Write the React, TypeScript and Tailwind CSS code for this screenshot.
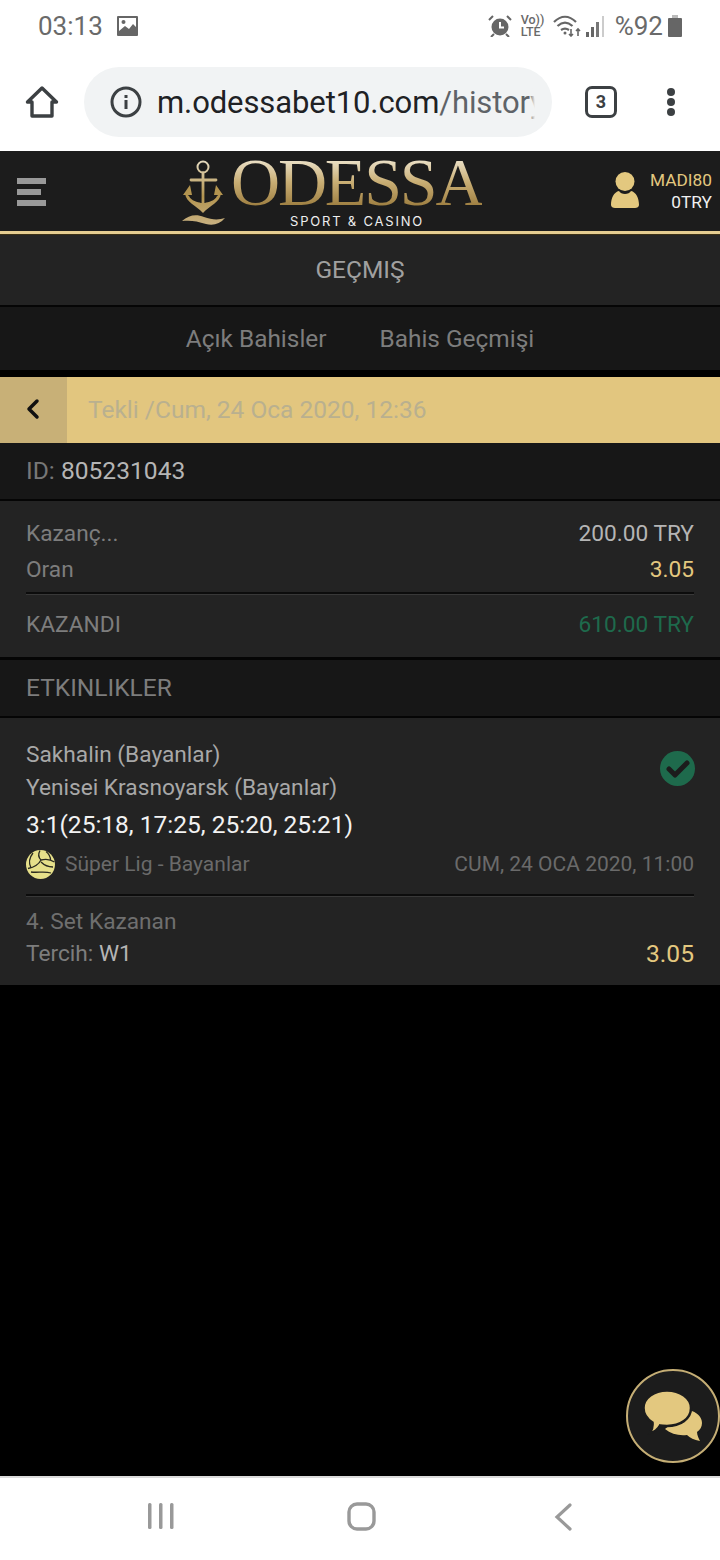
import React from "react";

const roboto = { fontFamily: "Roboto, sans-serif" };

function Row({ left, right, leftClass = "text-[#7d7d7d]", rightClass = "text-[#b5b5b5]" }: { left: string; right: string; leftClass?: string; rightClass?: string }) {
  return (
    <div className="flex items-center justify-between">
      <span className={leftClass}>{left}</span>
      <span className={rightClass}>{right}</span>
    </div>
  );
}

function Divider() {
  return (
    <div className="flex flex-col">
      <div className="h-[2px] bg-[#0c0c0c]" />
      <div className="h-[1px] bg-[#383838]" />
    </div>
  );
}

function StatusBar() {
  return (
    <div className="h-[50px] flex items-center justify-between pt-[2px] pl-[38px] pr-[38px] text-[#6a6a6a] text-[26px] bg-white">
      <div className="flex items-center gap-[14px]">
        <span className="leading-none">03:13</span>
        <svg width="21" height="20" viewBox="0 0 21 20" className="-mt-[1px]"><rect width="21" height="20" rx="1" fill="#666" /><rect x="2" y="2" width="17" height="16" fill="#fff" /><path d="M2 18v-3l6-5 4 3 4-5 3 3v7z" fill="#666" /><circle cx="6.500" cy="6" r="2" fill="#666" /></svg>
      </div>
      <div className="flex items-center">
        <svg width="24" height="22" viewBox="0 0 24 22" className="mr-[9px]"><circle cx="12" cy="12" r="8.500" fill="#666" /><path d="M12 7v5.500h4" stroke="#fff" strokeWidth="2" fill="none" /><path d="M1 5l4-4M23 5l-4-4M6 19l-3 3M18 19l3 3" stroke="#666" strokeWidth="2" /></svg>
        <div className="flex flex-col text-[12.500px] leading-[12px] font-medium mr-[9px] w-[23px] whitespace-nowrap -mt-[1px]"><span>Vo))</span><span>LTE</span></div>
        <svg width="28" height="22" viewBox="0 0 28 22" className="mr-[5px]" fill="none" stroke="#666" strokeWidth="2.200"><path d="M1 7c7-7 15-7 22 0M4.500 11c5-4.500 10-4.500 15 0M8 15c3-2 5-2 8 0" /><circle cx="12" cy="18" r="1.500" fill="#666" stroke="none" /><path d="M18 14v7M25 21v-7M16 19l2 2 2-2M23 16l2-2 2 2" strokeWidth="1.600" /></svg>
        <svg width="19" height="21" viewBox="0 0 19 21" className="mr-[10px]"><rect x="0" y="16" width="3" height="5" fill="#666" /><rect x="5" y="11" width="3" height="10" fill="#666" /><rect x="10" y="6" width="3" height="15" fill="#777" /><rect x="16" y="0" width="2" height="21" fill="#ccc" /></svg>
        <span className="leading-none mr-[5px]">%92</span>
        <svg width="14" height="22" viewBox="0 0 14 22"><rect x="4" y="0" width="6" height="3" fill="#bbb" /><rect x="0" y="3" width="14" height="19" rx="1" fill="#666" /></svg>
      </div>
    </div>
  );
}

function BrowserBar() {
  return (
    <div className="h-[101px] bg-white flex items-center pt-[3px]">
      <div className="w-[84px] flex justify-center">
        <svg width="34" height="34" viewBox="0 0 34 34" fill="none" stroke="#3c4043" strokeWidth="3.400" strokeLinejoin="round" className="-ml-[1px]"><path d="M17 3L2.500 17H7v14h20V17h4.500z" /></svg>
      </div>
      <div className="w-[468px] h-[70px] rounded-[35px] bg-[#f1f3f4] flex items-center pl-[26px] overflow-hidden">
        <svg width="32" height="32" viewBox="0 0 32 32" fill="none" className="shrink-0"><circle cx="16" cy="16" r="14" stroke="#3c4043" strokeWidth="3" /><rect x="14.500" y="14" width="3" height="9" fill="#3c4043" /><rect x="14.500" y="9" width="3" height="3" fill="#3c4043" /></svg>
        <div className="ml-[15px] w-[378px] overflow-hidden whitespace-nowrap text-[31px] leading-[36px] pt-[2px] tracking-[-0.1px] relative">
          <span className="text-[#202124]">m.odessabet10.com</span><span className="text-[#5f6368]">/history</span>
          <div className="absolute right-0 top-0 bottom-0 w-[6px] bg-gradient-to-r from-transparent to-[#f1f3f4]" />
        </div>
      </div>
      <div className="flex-1 flex items-center">
        <div className="ml-[33px] w-[32px] h-[32px] rounded-[7px] border-[3px] border-[#3c4043] flex items-center justify-center text-[#3c4043] text-[18px] font-bold leading-none">3</div>
        <div className="ml-[50px] flex flex-col gap-[2px]">
          <div className="w-[8px] h-[8px] rounded-full bg-[#3c4043]" />
          <div className="w-[8px] h-[8px] rounded-full bg-[#3c4043]" />
          <div className="w-[8px] h-[8px] rounded-full bg-[#3c4043]" />
        </div>
      </div>
    </div>
  );
}

function Logo() {
  return (
    <div className="flex items-start ml-[136px] h-[80px]">
      <svg width="43" height="66" viewBox="0 0 43 66" fill="none" className="mt-[9px] shrink-0">
        <defs>
          <linearGradient id="ag" x1="0" y1="0" x2="0" y2="66" gradientUnits="userSpaceOnUse"><stop offset="0" stopColor="#e6dcc2" /><stop offset="0.55" stopColor="#b3944f" /><stop offset="1" stopColor="#c9b283" /></linearGradient>
        </defs>
        <circle cx="21" cy="7" r="5.500" stroke="url(#ag)" strokeWidth="2" />
        <path d="M21 13v36M9 20h25" stroke="url(#ag)" strokeWidth="2.800" strokeLinecap="round" />
        <path d="M3 33C4 43 14 45 21 53C28 45 38 43 39 33L35 36C33 41 26 42 23 43H19C16 42 9 41 7 36z" fill="url(#ag)" />
        <path d="M1 35L8 25L10 35zM41 35L34 25L32 35z" fill="#b3944f" />
        <path d="M0 61C7 55 14 54 22 57C30 60 37 60 43 58C38 64 31 66 24 64C15 61 8 60 0 61z" fill="url(#ag)" />
      </svg>
      <div className="flex flex-col items-start ml-[6px] mt-[6px]">
        <div className="text-[68px] h-[50px] leading-[50px] tracking-[-2.200px] whitespace-nowrap text-transparent bg-clip-text bg-gradient-to-b from-[#efe7d2] via-[#c9ae74] to-[#9c7d3f]" style={{ fontFamily: "'Liberation Serif', serif" }}>ODESSA</div>
        <div className="ml-[59px] mt-[8px] text-[13px] leading-[13px] tracking-[1.800px] text-[#eeeeee] whitespace-nowrap" style={{ fontFamily: "Inter, sans-serif" }}>SPORT &amp; CASINO</div>
      </div>
    </div>
  );
}

function Header() {
  return (
    <div className="flex flex-col">
      <div className="h-[80px] bg-[#1c1c1c] flex items-center">
        <div className="ml-[17px] mt-[1px] w-[29px] flex flex-col gap-[5px] shrink-0">
          <div className="w-[29px] h-[6px] bg-[#999]" />
          <div className="w-[24px] h-[6px] bg-[#999]" />
          <div className="w-[29px] h-[6px] bg-[#999]" />
        </div>
        <Logo />
        <div className="ml-auto mr-[8px] flex items-start">
          <svg width="28" height="36" viewBox="0 0 28 36" className="mt-[3px] mr-[11px]" fill="#e3c87f"><circle cx="14" cy="9.500" r="9.500" /><path d="M0 33C0 26 3 20 8 19C10 23 18 23 20 19C25 20 28 26 28 33C28 35 26 36 24 36H4C2 36 0 35 0 33z" /></svg>
          <div className="flex flex-col items-end text-[17.300px] leading-[22px]">
            <span className="text-[#e3c87f]">MADI80</span>
            <span className="text-[#f0f0f0]">0TRY</span>
          </div>
        </div>
      </div>
      <div className="h-[3px] bg-[#e4cc90]" />
      <div className="h-[1px] bg-[#3a2f14]" />
    </div>
  );
}

export default function App() {
  return (
    <div className="w-[720px] h-[1560px] bg-black relative overflow-hidden flex flex-col" style={roboto}>
      <StatusBar />
      <BrowserBar />
      <Header />
      <div className="h-[72px] bg-[#232323] border-b-[2px] border-[#050505] flex items-center justify-center text-[#a0a0a0] text-[24.500px]">GEÇMIŞ</div>
      <div className="h-[63px] bg-[#171717] flex items-center justify-center text-[#7d7d7d] text-[24.400px] pt-[2px]">
        <span>Açık Bahisler</span>
        <span className="ml-[53px]">Bahis Geçmişi</span>
      </div>
      <div className="h-[66px] mt-[7px] bg-[#e2c67f] flex items-center">
        <div className="w-[67px] h-full bg-[#c8b077] flex items-center justify-center">
          <svg width="14" height="22" viewBox="0 0 14 22" fill="none" stroke="#111" strokeWidth="3.500" strokeLinecap="round" strokeLinejoin="round" className="-ml-[1px] -mt-[2px]"><path d="M11 3l-8 8 8 8" /></svg>
        </div>
        <span className="ml-[21px] text-[24.500px] text-[#b9b08f]">Tekli /Cum, 24 Oca 2020, 12:36</span>
      </div>
      <div className="h-[58px] bg-[#171717] border-b-[2px] border-[#050505] flex items-center px-[26px] text-[24.600px]">
        <span className="text-[#777]">ID:&nbsp;</span><span className="text-[#b5b5b5]">805231043</span>
      </div>
      <div className="bg-[#232323] h-[159px] border-b-[3px] border-[#050505] px-[26px] text-[22.700px] flex flex-col">
        <div className="h-[33px] mt-[17px] flex flex-col justify-center"><Row left="Kazanç..." right="200.00 TRY" /></div>
        <div className="h-[38px] flex flex-col justify-center"><Row left="Oran" right="3.05" rightClass="text-[#e3c87f]" /></div>
        <div className="mt-[3px]"><Divider /></div>
        <div className="h-[60px] flex flex-col justify-center"><Row left="KAZANDI" right="610.00 TRY" rightClass="text-[#1e6a4c]" /></div>
      </div>
      <div className="h-[58px] bg-[#171717] border-b-[2px] border-[#050505] flex items-center px-[26px] text-[24.500px] text-[#7d7d7d]">ETKINLIKLER</div>
      <div className="h-[267px] bg-[#232323] px-[26px] flex flex-col relative">
        <div className="text-[22.700px] leading-[33px] text-[#a8a8a8] mt-[20px]">Sakhalin (Bayanlar)</div>
        <div className="text-[22.700px] leading-[33px] text-[#a8a8a8]">Yenisei Krasnoyarsk (Bayanlar)</div>
        <div className="text-[24.500px] leading-[41px] text-[#f2f2f2] whitespace-nowrap">3:1(25:18, 17:25, 25:20, 25:21)</div>
        <div className="absolute right-[25px] top-[33px] w-[35px] h-[35px] rounded-full bg-[#1e6a4c] flex items-center justify-center">
          <svg width="24" height="20" viewBox="0 0 24 20" fill="none" stroke="#1c1c1c" strokeWidth="5" strokeLinecap="round" strokeLinejoin="round"><path d="M3 10l6 6L21 4" /></svg>
        </div>
        <div className="h-[39px] flex items-center justify-between text-[21px] text-[#6a6a6a]">
          <div className="flex items-center">
            <svg width="29" height="29" viewBox="0 0 29 29" fill="none" stroke="#2a2a20" strokeWidth="1.300" className="mr-[10px]">
              <circle cx="14.500" cy="14.500" r="14.500" fill="#e6e08a" stroke="none" />
              <path d="M15 10C12 7 12 4 14 0.500M15 10C19 9 24 9 28.500 12M15 10C13 14 9 17 2 18.500" />
              <path d="M7 3C3 8 3 14 5 18M20 1.500C23 4 24.500 7 24.500 10M5 22C11 23 19 21 25 23" />
              <path d="M15 12C18 15 22 17 27 17" />
            </svg>
            <span>Süper Lig - Bayanlar</span>
          </div>
          <span>CUM, 24 OCA 2020, 11:00</span>
        </div>
        <div className="mt-[10px]"><Divider /></div>
        <div className="text-[22.700px] leading-[31px] text-[#6f6f6f] mt-[9px]">4. Set Kazanan</div>
        <div className="flex items-center justify-between text-[22.700px] leading-[32px] mt-[1px]">
          <span><span className="text-[#7d7d7d]">Tercih: </span><span className="text-[#b5b5b5]">W1</span></span>
          <span className="text-[#e3c87f] text-[24.600px]">3.05</span>
        </div>
      </div>
      <div className="absolute left-0 right-0 bottom-0 h-[84px] bg-white border-t-[2px] border-[#dcdcdc]">
        <svg width="26" height="26" viewBox="0 0 26 26" className="absolute left-[148px] top-[25px]" fill="#999"><rect x="0" y="0" width="3.500" height="26" rx="1.500" /><rect x="11" y="0" width="3.500" height="26" rx="1.500" /><rect x="22" y="0" width="3.500" height="26" rx="1.500" /></svg>
        <svg width="29" height="29" viewBox="0 0 29 29" className="absolute left-[347px] top-[24px]" fill="none" stroke="#999" strokeWidth="3.400"><rect x="2" y="2" width="25" height="25" rx="8" /></svg>
        <svg width="18" height="28" viewBox="0 0 18 28" className="absolute left-[554px] top-[25px]" fill="none" stroke="#999" strokeWidth="3.200" strokeLinecap="round"><path d="M16 2L3 14l13 12" /></svg>
      </div>
      <div className="absolute left-[626px] top-[1369px] w-[94px] h-[94px] rounded-full bg-[#1c1c1c] border-[2px] border-[#c5ae75] flex items-center justify-center">
        <svg width="60" height="52" viewBox="0 0 60 52" fill="#e3c87f">
          <path d="M46 20C54 22 59 27 59 33C59 37 57 40 54 42C54 45 56 49 57 51C51 50 47 48 44 45C36 46 28 44 22 39z" />
          <path d="M24 0.500C37 0.500 48 8 48 18C48 29 37 36 24 36C21 36 19 36 17 35.500C15 39 11 42 7 43C9 40 10 37 9.500 32.500C4 29 0.500 24 0.500 18C0.500 8 11 0.500 24 0.500z" stroke="#1c1c1c" strokeWidth="2.500" />
        </svg>
      </div>
    </div>
  );
}
